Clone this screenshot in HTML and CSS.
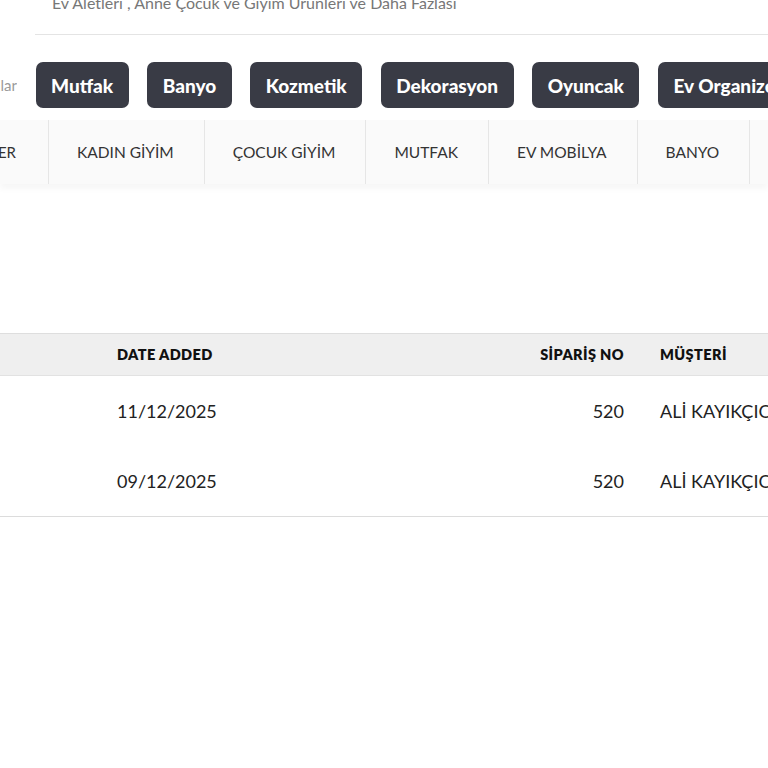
FILE: index.html
```html
<!DOCTYPE html>
<html lang="tr">
<head>
<meta charset="utf-8">
<title>Siparişler</title>
<link rel="stylesheet" href="styles.css">
</head>
<body>
<div class="page">
  <header class="top">
    <p class="tagline">Ev Aletleri , Anne Çocuk ve Giyim Ürünleri ve Daha Fazlası</p>
    <div class="rule"></div>
    <div class="chips">
      <div class="chips-label"><span>Popüler Aramalar</span></div>
      <a class="chip">Mutfak</a>
      <a class="chip">Banyo</a>
      <a class="chip">Kozmetik</a>
      <a class="chip">Dekorasyon</a>
      <a class="chip">Oyuncak</a>
      <a class="chip">Ev Organizer</a>
    </div>
  </header>
  <nav class="menu">
    <div class="menu-first"><span>TÜM KATEGORİLER</span></div>
    <a class="menu-item">KADIN GİYİM</a>
    <a class="menu-item">ÇOCUK GİYİM</a>
    <a class="menu-item">MUTFAK</a>
    <a class="menu-item">EV MOBİLYA</a>
    <a class="menu-item">BANYO</a>
    <a class="menu-item">KOZMETİK</a>
  </nav>
  <main class="content">
    <div class="table">
      <div class="row head">
        <div class="cell"></div>
        <div class="cell">DATE ADDED</div>
        <div class="cell right">SİPARİŞ NO</div>
        <div class="cell">MÜŞTERİ</div>
      </div>
      <div class="row">
        <div class="cell"></div>
        <div class="cell">11/12/2025</div>
        <div class="cell right">520</div>
        <div class="cell">ALİ KAYIKÇIOĞLU</div>
      </div>
      <div class="row last">
        <div class="cell"></div>
        <div class="cell">09/12/2025</div>
        <div class="cell right">520</div>
        <div class="cell">ALİ KAYIKÇIOĞLU</div>
      </div>
    </div>
  </main>
</div>
</body>
</html>
```

FILE: styles.css
```css
* { box-sizing: border-box; }
html, body { margin: 0; padding: 0; background: #fff; }
body { font-family: Lato, "Open Sans", "Liberation Sans", sans-serif; color: #222; }
.page { width: 768px; height: 768px; overflow: hidden; }

.top { padding: 0; }
.tagline {
  margin: -7px 0 0 52px;
  font-size: 16px;
  line-height: 20px;
  color: #777;
  white-space: nowrap;
}
.rule { height: 1px; background: #e4e4e4; margin: 21px 0 0 35px; width: 1000px; }

.chips {
  display: flex;
  align-items: center;
  gap: 18.5px;
  margin-top: 27px;
  height: 46px;
  white-space: nowrap;
}
.chips-label {
  width: 17px;
  flex: none;
  display: flex;
  justify-content: flex-end;
  overflow: hidden;
  font-size: 15px;
  color: #9a9a9a;
}
.chip {
  flex: none;
  height: 46px;
  display: flex;
  align-items: center;
  padding: 0 15.5px;
  background: #393b45;
  color: #fff;
  border-radius: 7px;
  font-weight: 900;
  font-size: 19px;
  letter-spacing: 0;
}

.menu {
  display: flex;
  height: 64px;
  margin-top: 12px;
  background: #fafafa;
  box-shadow: 0 5px 6px rgba(0,0,0,0.035);
  white-space: nowrap;
}
.menu-first {
  width: 49px;
  flex: none;
  display: flex;
  justify-content: flex-end;
  align-items: center;
  overflow: hidden;
  padding-right: 32px;
  border-right: 1px solid #e6e6e6;
  font-size: 15px;
  color: #333;
}
.menu-item {
  flex: none;
  display: flex;
  align-items: center;
  padding: 0 30px 0 28px;
  border-right: 1px solid #e6e6e6;
  font-size: 15.5px;
  color: #333;
}

.content { padding-top: 149px; }
.table { width: 1000px; }
.row {
  display: grid;
  grid-template-columns: 99px 300px 243px 358px;
  height: 70px;
  align-items: center;
  font-size: 18px;
  color: #222;
}
.row.head {
  height: 43px;
  background: #efefef;
  border-top: 1px solid #dedede;
  border-bottom: 1px solid #e2e2e2;
  font-size: 14.5px;
  font-weight: 800;
  color: #111;
  letter-spacing: 0.4px;
}
.row.last { border-bottom: 1px solid #dcdcdc; height: 71px; }
.cell { padding: 0 18px; white-space: nowrap; }
.cell.right { text-align: right; }
```
